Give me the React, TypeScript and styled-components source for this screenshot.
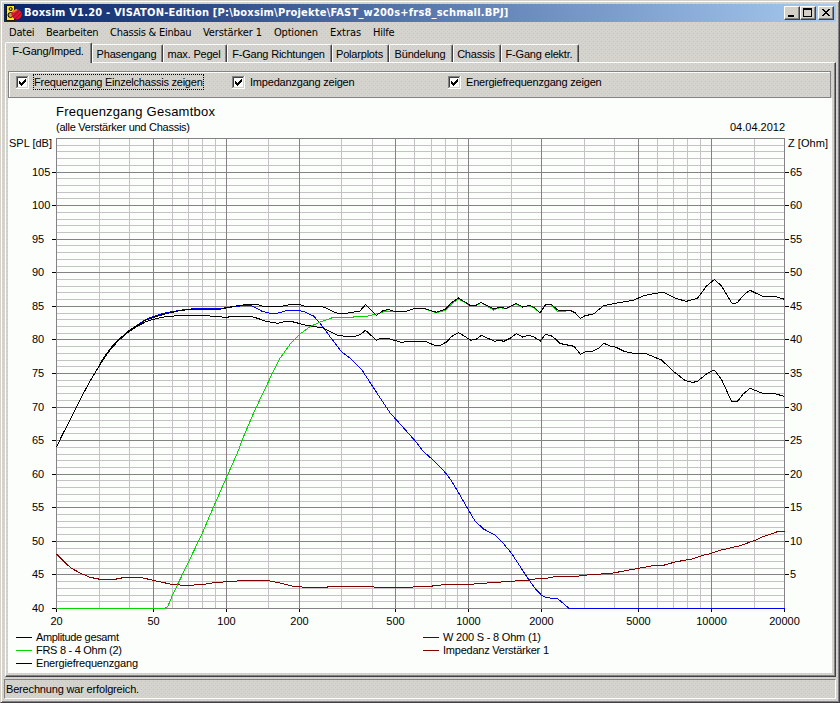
import React from "react";
import styled, { createGlobalStyle, css } from "styled-components";

const GlobalStyle = createGlobalStyle`
  html, body { margin: 0; padding: 0; overflow: hidden; }
  body { font: 11px/13px "Liberation Sans", Arial, sans-serif; color: #000; }
  * { box-sizing: border-box; }
`;

const texture = css`
  background-color: #d4d3ce;
  background-image: radial-gradient(circle at 0.5px 0.5px, #c6c5c1 0.7px, transparent 0.8px),
    radial-gradient(circle at 2.5px 2.5px, #cac9c5 0.7px, transparent 0.8px);
  background-size: 4px 4px;
`;

const Window = styled.div`
  width: 840px;
  height: 703px;
  display: flex;
  flex-direction: column;
  padding: 3px;
  border: 1px solid;
  border-color: #d4d0c8 #404044 #404044 #d4d0c8;
  box-shadow: inset 1px 1px #fcfefc, inset -1px -1px #848284;
  ${texture}
`;

const TitleBar = styled.header`
  display: flex;
  align-items: center;
  height: 18px;
  padding: 0 2px;
  background: linear-gradient(90deg, #0a246a, #a6caf0);
`;

const AppIcon = styled.svg`
  width: 16px;
  height: 16px;
  flex: none;
`;

const TitleText = styled.h1`
  flex: 1;
  margin: 0 0 0 2px;
  color: #fff;
  font: bold 11px/16px "DejaVu Sans Condensed", "DejaVu Sans", sans-serif;
  font-stretch: condensed;
  letter-spacing: 0.21px;
  white-space: nowrap;
`;

const WindowButton = styled.button<{ $gap?: boolean }>`
  width: 16px;
  height: 14px;
  padding: 0;
  margin-left: ${(p) => (p.$gap ? 2 : 0)}px;
  border: 1px solid;
  border-color: #fff #404040 #404040 #fff;
  box-shadow: inset -1px -1px #848284;
  background: #d4d0c8;
  svg { display: block; width: 14px; height: 12px; }
`;

const MenuBar = styled.nav`
  display: flex;
  height: 20px;
  padding: 0 5px;
  gap: 12px;
  font: 11px/21px "DejaVu Sans Condensed", "DejaVu Sans", sans-serif;
  font-stretch: condensed;
  white-space: nowrap;
`;

const MenuItem = styled.span<{ $width: number; $track: number }>`
  width: ${(p) => p.$width}px;
  letter-spacing: ${(p) => p.$track}px;
`;

const TabStrip = styled.div`
  display: flex;
  align-items: flex-end;
  height: 20px;
  padding-left: 1px;
`;

const Tab = styled.button<{ $width: number; $active?: boolean; $track?: number }>`
  width: ${(p) => p.$width}px;
  height: ${(p) => (p.$active ? 21 : 18)}px;
  margin-bottom: ${(p) => (p.$active ? -1 : 0)}px;
  padding: ${(p) => (p.$active ? "0 1px 3px 0" : "1px 2px 0 0")};
  z-index: ${(p) => (p.$active ? 1 : 0)};
  border: 0 solid;
  border-width: 1px 1px 0 1px;
  border-color: #fcfefc #404044 #fcfefc #fcfefc;
  border-radius: 2px 2px 0 0;
  box-shadow: inset -1px 0 #848284;
  font: inherit;
  letter-spacing: ${(p) => p.$track ?? -0.2}px;
  color: inherit;
  white-space: nowrap;
  text-align: center;
  ${texture}
`;

const Page = styled.main`
  display: flex;
  flex-direction: column;
  width: 831px;
  height: 615px;
  margin-left: 1px;
  padding: 8px 3px 3px 2px;
  border: 1px solid;
  border-color: #fcfefc #404044 #404044 #fcfefc;
  box-shadow: inset -1px -1px #848284;
`;

const Options = styled.section`
  display: flex;
  align-items: center;
  height: 27px;
  width: 823px;
  padding: 0 7px 5px;
  flex: none;
  border: 1px solid #848284;
  box-shadow: inset 1px 1px #fcfefc;
`;

const CheckLabel = styled.label<{ $width: number }>`
  display: flex;
  align-items: center;
  gap: 4px;
  width: ${(p) => p.$width}px;
  white-space: nowrap;
`;

const CheckBox = styled.svg`
  width: 13px;
  height: 13px;
  flex: none;
`;

const Caption = styled.span<{ $focused?: boolean; $track: number }>`
  height: 16px;
  line-height: 14px;
  letter-spacing: ${(p) => p.$track}px;
  border: 1px dotted ${(p) => (p.$focused ? "#000" : "transparent")};
`;

const Chart = styled.svg`
  display: block;
  width: 824px;
  height: 575px;
  flex: none;
  background: #fcfefc;
  font: 11px "Liberation Sans", Arial, sans-serif;
`;

const StatusBar = styled.footer`
  display: flex;
  align-items: center;
  height: 20px;
  margin-top: 2px;
  padding-left: 1px;
  border: 1px solid;
  border-color: #848284 #fcfefc #fcfefc #848284;
  letter-spacing: -0.17px;
`;

const TABS: [string, number, number?][] = [
  ["Phasengang", 71],
  ["max. Pegel", 64],
  ["F-Gang Richtungen", 105],
  ["Polarplots", 57],
  ["Bündelung", 64],
  ["Chassis", 48],
  ["F-Gang elektr.", 78],
];

const MENUS: [string, number, number][] = [
  ["Datei", 25, -0.2],
  ["Bearbeiten", 52, -0.2],
  ["Chassis & Einbau", 81, -0.25],
  ["Verstärker 1", 59, -0.1],
  ["Optionen", 44, -0.2],
  ["Extras", 31, 0],
  ["Hilfe", 22, -0.2],
];

const FREQS = [
  20, 30, 40, 50, 60, 70, 80, 90, 100, 150, 200, 300, 400, 500, 600, 700, 800, 900, 1000, 1500,
  2000, 3000, 4000, 5000, 6000, 7000, 8000, 9000, 10000, 15000, 20000,
];
const MAJOR = [20, 50, 100, 200, 500, 1000, 2000, 5000, 10000, 20000];
const LEVELS = Array.from({ length: 71 }, (_, i) => 40 + i);

const freqX = (f: number) => Math.round(56 + (728 * Math.log10(f / 20)) / 3) + 0.5;
const levelY = (v: number) => Math.round(608 - ((v - 40) * 470) / 70) + 0.5;

const BASS_RISE = "56.5,447 62,435.5 68.5,423 75,410 81.5,397 89,383 97,369.5";

const CURVES: { color: string; points: string }[] = [
  {
    color: "#800000",
    points:
      "56.5,554 63.5,561 70.5,567.7 80,573 90,577.3 100,579.3 115,579.3 125,577.3 140,577.3 155,580.7 170,584 183.5,585.3 190,585.3 206.5,584 216.5,582.3 230,581.7 243.5,580.3 266.5,580.3 280,583 293.5,586.3 305,587.3 326.5,587.3 330,586.3 371.5,586.3 375,587.3 406.5,587.3 430,586.3 443.5,584.7 470,584.3 510,581.3 528,580.3 536.5,578.7 546.5,578.3 556.5,576.3 576.5,576.3 590,574.7 611.5,573.3 638.5,568.3 655,565.3 663.5,565.3 675,562 693.5,558.7 701.5,555.7 711.5,553.3 720,550.3 740,545.7 755,540.3 761.5,537.3 778.5,531.3 784.5,531.3",
  },
  {
    color: "#0000f0",
    points:
      BASS_RISE +
      " 112,346.5 128.5,331 146,319.3 156,315.5 167,312.5 180,310.3 195,308.5 210,308.5 217,309 232,307 245,305.3 250,305.4 253.5,306.7 261.5,311 270,313.3 277,313.3 286.5,310.7 300,310.7 305,312 313.5,316 320,323 330,336.7 341.5,351.7 351.5,359.3 361.5,369.3 371.5,384.7 380,397.7 390,412.7 396.5,420 415,440.7 423.5,451.7 433.5,460.3 445,472.3 450.5,479.3 456.5,489.3 468.5,510 475,521 483.5,529 495,535 501.5,541.3 511.5,553.3 526.5,576.3 535,588.3 541.5,595.3 546.5,597.7 557.5,598.7 560,600.5 569,608.5 784.5,608.5",
  },
  {
    color: "#00d800",
    points:
      "56.5,608.5 164,608.5 167.7,606.7 173,594 202,534 208.5,518.5 226.5,477.3 237.5,452.7 243.5,436.7 255,410 273.5,371 280,358.3 290,344.3 300,334 310,326.7 320,322 331.5,318 348,317.3 366.5,316.3 376.5,314 386.5,311 406,311.4 415,308.5 423.5,308.5 436.5,312.7 445.5,310.2 451.5,304 458.5,299 470,305.4 476,305.4 481,302.5 493.5,310 499.5,307.7 506.5,308.5 516,304.2 522.5,307.2 529.5,305.5 535,308.5 540,313 545.5,304.7 551.5,304.9 557.5,311.3 566,311.3",
  },
  {
    color: "#000",
    points:
      BASS_RISE +
      " 103,360 110,350 118,341 126.7,333.3 136,327 146.7,321.3 156,318.7 166.7,316.5 183.3,315.3 203.3,315.3 215,316.6 226.7,317.3 233,316.3 251.7,316.5 258,318.5 265,321 273,322.7 278,323.3 283,322 290,321.3 295,322.3 303.5,324.7 323.5,328 336.5,335 345,336.3 355,336.3 360,334.7 365.5,330.3 376.5,340.3 380,338.7 388.5,338.7 401.5,342.3 408.5,341.3 425,341.3 435,345.5 440,345.5 446.5,342 451.5,336.7 458.5,332.5 471,340.3 476.5,339 481.5,335.3 494.5,341.3 499,340.3 504,341.3 510,338.3 516.5,333.7 522.5,337 528.5,335.3 533.5,336.7 540.5,341 545.5,334.3 552.5,336.3 560,343.5 574,346.3 580.5,354.3 585.5,351.7 592.5,351.3 599.5,347.7 604,343.3 610,346 616,347.3 625,351.7 633.5,353.3 645,353.3 661.5,360 675,372.7 685,380.3 692.5,382.5 697.5,381.3 706.5,374 711,371.3 714.5,370.3 721.5,379.3 731.5,401.3 737.5,401.3 743.5,393.7 750,388.3 762.5,393.3 775,393.7 784.5,396.5",
  },
  {
    color: "#000",
    points:
      BASS_RISE +
      " 104,357 112,346.5 120,338.5 128.5,331 137,325.5 146,320 156,316.5 167,313.5 178,311 190,309.3 220,309.3 232,306.5 245,304.7 257,304.3 265,307 280,306.7 291,304.3 300,304.7 305,306.3 321.5,306.6 326.5,308.3 336.5,313 346.5,313.3 360,311 365.5,304.7 376.5,315.3 382.5,311 388.5,309.3 393.5,311.3 406,311.3 415,308.3 423.5,308.3 436.5,312.3 445.5,309 451.5,302.7 458.5,298 470,305.3 476,305.3 481,302.3 493.5,309 499.5,307.3 506.5,308.3 516,303.3 522.5,307 529.5,305.3 535,307.7 540,313 545.5,304.7 551.5,304.7 558.5,310.7 571,310.7 575,312.7 580.5,318.3 585,315.7 593.5,314 603.5,305.7 615,303.3 633.5,300.3 643.5,295.7 653.5,293.7 663.5,292.3 676.5,298.7 686.5,301.3 697.5,298.3 706.5,286 714.5,279.5 721.5,286 731.5,302.7 734,303.7 737.5,302.3 744,294.7 750,290.3 762.5,296.3 775,296.3 784.5,299.3",
  },
];

const LEGEND: [string, string, number, number, number][] = [
  ["Amplitude gesamt", "#000", 16, 637, 83],
  ["FRS 8 - 4 Ohm (2)", "#00d800", 16, 650, 86],
  ["Energiefrequenzgang", "#000", 16, 663, 102],
  ["W 200 S - 8 Ohm (1)", "#0000f0", 423, 637, 98],
  ["Impedanz Verstärker 1", "#800000", 423, 650, 106],
];

function ResponseChart() {
  return (
    <Chart viewBox="8 98 824 575">
      <g shapeRendering="crispEdges" fill="none" strokeWidth="1">
        <g stroke="#c4c2c4">
          {LEVELS.filter((v) => v % 5 !== 0).map((v) => (
            <path key={v} d={`M56 ${levelY(v)}H785`} />
          ))}
          {FREQS.filter((f) => !MAJOR.includes(f)).map((f) => (
            <path key={f} d={`M${freqX(f)} 138V609`} />
          ))}
        </g>
        <g stroke="#848284">
          {LEVELS.filter((v) => v % 5 === 0).map((v) => (
            <path key={v} d={`M56 ${levelY(v)}H785`} />
          ))}
          {MAJOR.map((f) => (
            <path key={f} d={`M${freqX(f)} 138V609`} />
          ))}
        </g>
        {CURVES.map((c, i) => (
          <polyline key={i} stroke={c.color} points={c.points} />
        ))}
        <g stroke="#000">
          {LEVELS.filter((v) => v % 5 === 0 && v < 110).map((v) => (
            <path key={v} d={`M52 ${levelY(v)}H56${v > 40 ? "M785 " + levelY(v) + "H789" : ""}`} />
          ))}
          {MAJOR.map((f) => (
            <path key={f} d={`M${freqX(f)} 609V612`} />
          ))}
        </g>
        {LEGEND.map(([name, color, x, y]) => (
          <path key={name} stroke={color} d={`M${x} ${y + 0.5}h16`} />
        ))}
      </g>
      <text x="56" y="116" fontSize="13" textLength="159">Frequenzgang Gesamtbox</text>
      <text x="56" y="131" textLength="134">(alle Verstärker und Chassis)</text>
      <text x="730" y="131" textLength="55">04.04.2012</text>
      <text x="9" y="147" textLength="43">SPL [dB]</text>
      <text x="788" y="147" textLength="40">Z [Ohm]</text>
      {LEVELS.filter((v) => v % 5 === 0 && v < 110).map((v) => (
        <g key={v}>
          <text x="32" y={levelY(v) + 3.5}>{v}</text>
          {v > 40 && <text x="790" y={levelY(v) + 3.5}>{v - 40}</text>}
        </g>
      ))}
      {MAJOR.map((f) => (
        <text key={f} x={freqX(f)} y="625" textAnchor="middle">{f}</text>
      ))}
      {LEGEND.map(([name, , x, y, w]) => (
        <text key={name} x={x + 20} y={y + 4} textLength={w}>{name}</text>
      ))}
    </Chart>
  );
}

function Check({ label, width, track, focused }: { label: string; width: number; track: number; focused?: boolean }) {
  return (
    <CheckLabel $width={width}>
      <CheckBox viewBox="0 0 13 13" shapeRendering="crispEdges">
        <path fill="#fcfefc" d="M0 0h13v13H0z" />
        <path fill="#848284" d="M0 0h12v1H1v11H0z" />
        <path fill="#404040" d="M1 1h10v1H2v9H1z" />
        <path fill="#d4d0c8" d="M11 1h1v11H1v-1h10z" />
        <path d="M3 5h1v1h1v1h1V6h1V5h1V4h1V3h1v3H9v1H8v1H7v1H6v1H5V9H4V8H3z" />
      </CheckBox>
      <Caption $focused={focused} $track={track}>{label}</Caption>
    </CheckLabel>
  );
}

export default function App() {
  return (
    <>
      <GlobalStyle />
      <Window>
        <TitleBar>
          <AppIcon viewBox="0 0 16 16">
            <path fill="#181800" d="M0 0h9v16H0z" />
            <path fill="#f8e820" d="M1 1h7v14H1z" />
            <circle cx="4.7" cy="4" r="1.5" fill="#e8c080" stroke="#000" />
            <circle cx="4.5" cy="10" r="2.5" fill="#d89050" stroke="#000" />
            <circle cx="10.7" cy="9.3" r="5.1" fill="#d81830" />
            <path d="M6.5 12l7-7M9 14l6-6" stroke="#781830" />
            <path d="M7 7l4-2.5" stroke="#ff7840" strokeWidth="1.5" />
          </AppIcon>
          <TitleText>Boxsim V1.20 - VISATON-Edition [P:\boxsim\Projekte\FAST_w200s+frs8_schmall.BPJ]</TitleText>
          <WindowButton aria-label="Minimieren">
            <svg viewBox="0 0 14 12"><path d="M3 8h6v2H3z" /></svg>
          </WindowButton>
          <WindowButton aria-label="Maximieren">
            <svg viewBox="0 0 14 12"><path fillRule="evenodd" d="M2 1h9v9H2zM3 3v6h7V3z" /></svg>
          </WindowButton>
          <WindowButton $gap aria-label="Schließen">
            <svg viewBox="0 0 14 12" shapeRendering="crispEdges">
              <path d="M3 2h2v1h1v1h2V3h1V2h2v1h-1v1H9v1H8v1h1v1h1v1h1v1H9V8H8V7H6v1H5v1H3V8h1V7h1V6h1V5H5V4H4V3H3z" />
            </svg>
          </WindowButton>
        </TitleBar>
        <MenuBar>
          {MENUS.map(([name, w, t]) => (
            <MenuItem key={name} $width={w} $track={t}>{name}</MenuItem>
          ))}
        </MenuBar>
        <TabStrip>
          <Tab $width={87} $active>F-Gang/Imped.</Tab>
          {TABS.map(([name, w, t]) => (
            <Tab key={name} $width={w} $track={t}>{name}</Tab>
          ))}
        </TabStrip>
        <Page>
          <Options>
            <Check label="Frequenzgang Einzelchassis zeigen" width={216} track={-0.23} focused />
            <Check label="Impedanzgang zeigen" width={216} track={-0.2} />
            <Check label="Energiefrequenzgang zeigen" width={200} track={-0.2} />
          </Options>
          <ResponseChart />
        </Page>
        <StatusBar>Berechnung war erfolgreich.</StatusBar>
      </Window>
    </>
  );
}
